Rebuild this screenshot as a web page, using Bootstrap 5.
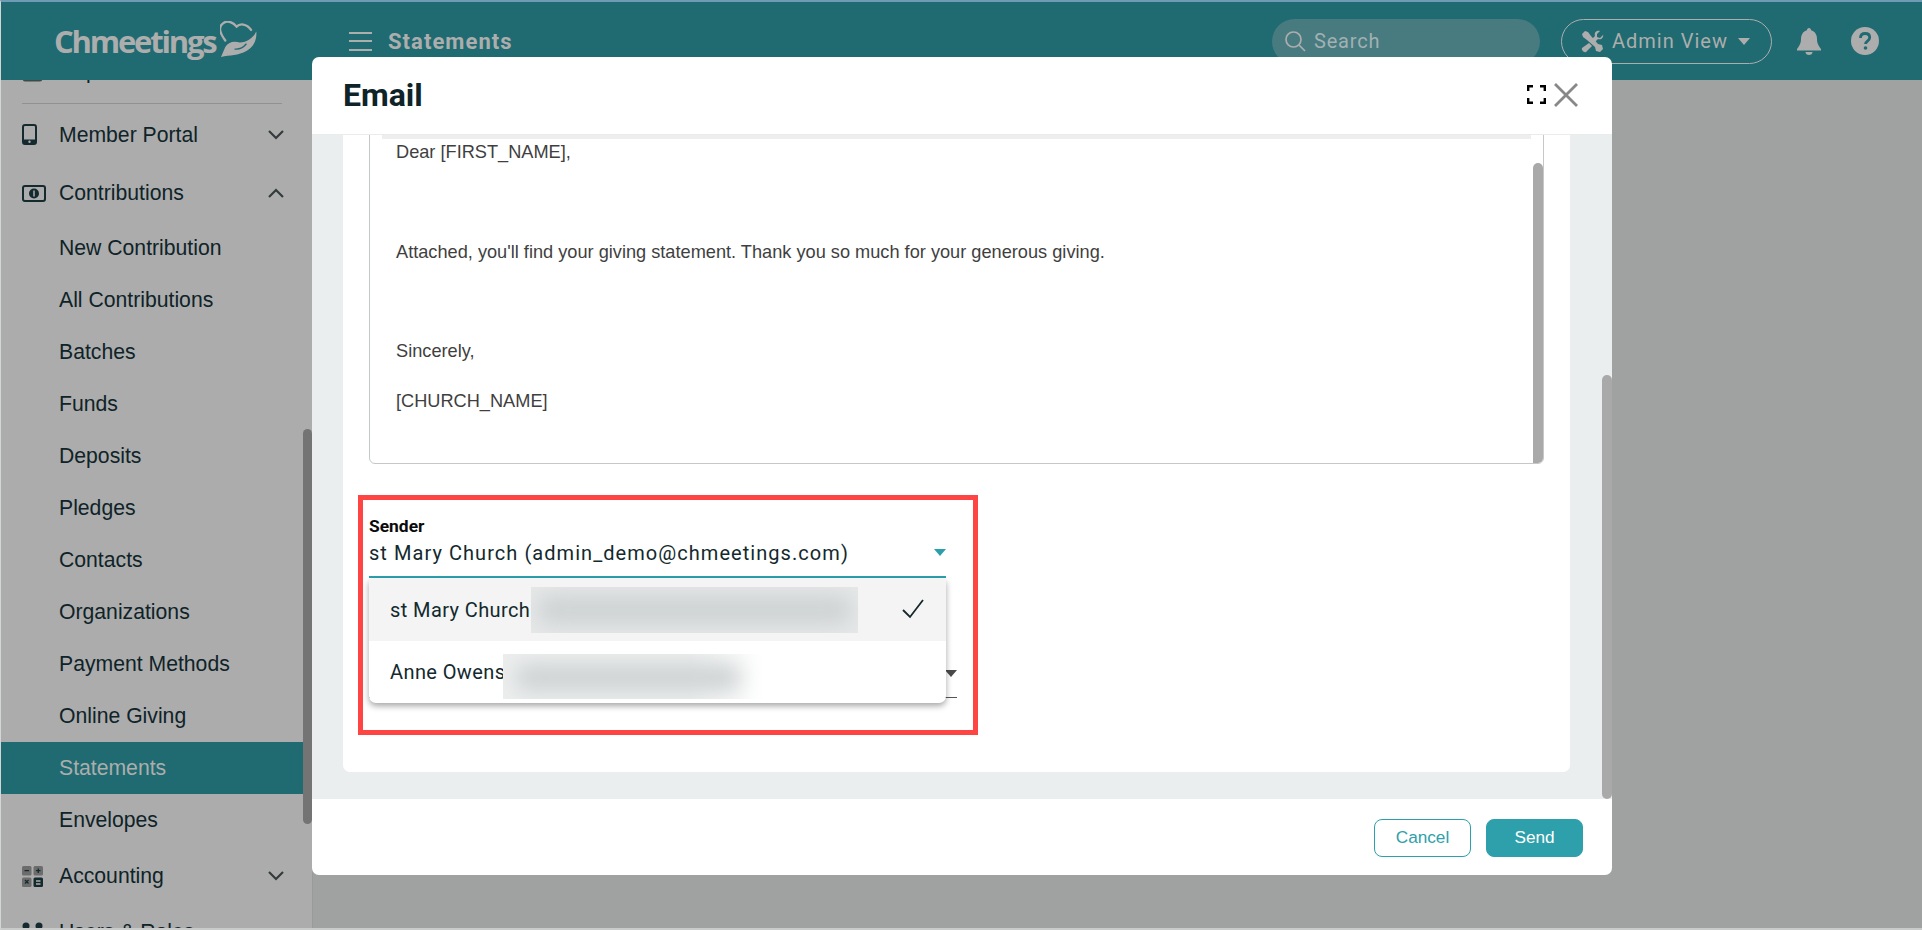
<!DOCTYPE html>
<html lang="en">
<head>
    <meta charset="UTF-8">
    <meta name="viewport" content="width=device-width, initial-scale=1.0">
    <title>Statements</title>
    <link href="https://cdn.jsdelivr.net/npm/bootstrap@5.3.0/dist/css/bootstrap.min.css" rel="stylesheet">
    <style>
        html, body { height: 100%; overflow: hidden; }
        body { font-family: "Liberation Sans", Arial, sans-serif; background: #a0a2a1; }
        .page { height: 930px; position: relative; border-top: 2px solid #6f9cb4; border-left: 1px solid #d4d6d6; border-bottom: 2px solid #c9cbcb; overflow: hidden; }

        .top-bar { height: 78px; background: #1f6b71; color: #adadad; padding-left: 53px; }
        .logo-text { font-family: "Open Sans", sans-serif; font-weight: 700; font-size: 31px; letter-spacing: -2.2px; width: 164px; line-height: 1; margin-top: 1px; }
        .logo-mark { margin-left: 2px; margin-top: -3px; flex: none; }
        .burger { margin-left: 92px; width: 23px; }
        .burger span { display: block; height: 2px; background: #adadad; margin-bottom: 6.5px; }
        .burger span:last-child { margin-bottom: 0; }
        .page-title { font-family: "Roboto", sans-serif; font-weight: 700; font-size: 22px; letter-spacing: 1.05px; margin-left: 16px; }
        .search-pill { width: 268px; height: 45px; border-radius: 23px; background: #477b80; margin-left: auto; padding-left: 12px; font-family: "Roboto", sans-serif; font-size: 20px; letter-spacing: .8px; color: #a2b1b2; }
        .admin-pill { width: 211px; height: 45px; border: 1px solid #adadad; border-radius: 23px; margin-left: 21px; padding-left: 19px; font-family: "Roboto", sans-serif; font-size: 20px; letter-spacing: 1px; }
        .admin-pill .caret { width: 0; height: 0; border-left: 6.5px solid transparent; border-right: 6.5px solid transparent; border-top: 7px solid #adadad; margin-left: 10px; }
        .bell { margin-left: 25px; }
        .help { margin-left: 30px; margin-right: 43px; }

        .side-nav { width: 312px; height: 850px; background: #acacac; overflow: hidden; position: relative; font-size: 21.2px; color: #0f2328; border-right: 1px solid #9a9a9a; }
        .side-nav .list { margin-top: -35px; }
        .side-nav .item { height: 52px; padding-left: 58px; display: flex; align-items: center; }
        .side-nav .group { padding-left: 21px; }
        .side-nav .group svg.ico { flex: none; }
        .side-nav .group .lbl { flex: 1; }
        .side-nav .group svg.chev { margin-right: 28px; }
        .side-nav .portal { margin-top: 4.5px; }
        .side-nav .portal .lbl { margin-left: 22px; }
        .side-nav .contrib { margin-top: 6.5px; margin-bottom: 3px; }
        .side-nav .contrib .lbl { margin-left: 13px; }
        .side-nav .account { margin-top: 4px; }
        .side-nav .account .lbl { margin-left: 16px; }
        .side-nav .active-item { background: #1f6b71; color: #adadad; margin-right: 9px; }
        .side-nav hr { margin: 6px 30px 0 21px; border-color: #919191; opacity: 1; }
        .side-thumb { position: absolute; left: 302px; top: 349px; width: 9px; height: 395px; border-radius: 5px; background: #747474; }

        .email-dialog { position: absolute; left: 311px; top: 55px; width: 1300px; height: 818px; border: 0; border-radius: 7px; overflow: hidden; background: #fff; }
        .email-dialog .modal-header { height: 78px; flex: none; padding: 0 34px 2px 31px; border-bottom: 1px solid #e9ebec; }
        .email-dialog .modal-title { font-family: "Roboto", sans-serif; font-weight: 700; font-size: 32px; color: #0e2429; }
        .email-dialog .modal-body { background: #ebeeef; padding: 0 42px 27px 31px; overflow: hidden; position: relative; display: flex; flex-direction: column; justify-content: flex-end; }
        .email-dialog .modal-footer { height: 76px; flex: none; padding: 2px 29px 0 0; border: 0; gap: 15px; }
        .email-dialog .modal-footer .btn { width: 97px; height: 38px; padding: 0; margin: 0; border-radius: 8px; font-size: 17.2px; }
        .btn-line { color: #2ea0ab; background: #fff; border: 1px solid #2ea0ab; }
        .btn-fill { color: #fff; background: #2ea0ab; border: 1px solid #2ea0ab; }
        .body-thumb { position: absolute; right: 0; bottom: 0; width: 10px; height: 424px; border-radius: 5px; background: #a9a9a9; }

        .form-card { background: #fff; border-radius: 0 0 7px 7px; padding: 0 26px; flex: none; height: 650px; }
        .editor { height: 342px; border: 1px solid #c6c8c8; border-radius: 6px; padding: 12px 12px 0 12px; position: relative; overflow: hidden; font-size: 18.2px; color: #3f3f3f; }
        .editor .bar { height: 4px; background: #eeeeee; margin-bottom: 2px; }
        .editor p { line-height: 22px; margin: 0 0 27.8px 14px; }
        .editor .thumb { position: absolute; right: 0; top: 40px; bottom: 0; width: 10px; background: #a9a9a9; border-radius: 5px 5px 0 0; }

        .sender { position: relative; padding-top: 52px; font-family: "Roboto", sans-serif; color: #12292d; }
        .sender-label { font-weight: 700; font-size: 17.4px; line-height: 20px; color: #0a0a0a; }
        .sender-select { width: 577px; height: 42px; padding-top: 2px; border-bottom: 2px solid #2ba0ab; font-size: 20px; letter-spacing: 1.05px; line-height: 30px; position: relative; }
        .arrow { position: absolute; width: 0; height: 0; border-left: 6.5px solid transparent; border-right: 6.5px solid transparent; }
        .sender-select .arrow { right: 0; top: 13px; border-top: 7px solid #2ba0ab; }
        .field-two { width: 588px; height: 120px; border-bottom: 1px solid #555; position: relative; }
        .field-two .arrow { right: 0; bottom: 20px; border-top: 7px solid #4a4a4a; }
        .sender-menu { position: absolute; left: 0; top: 115px; width: 577px; height: 124px; background: #fff; border-radius: 0 0 7px 7px; box-shadow: 0 3px 6px rgba(0,0,0,.35); font-size: 20px; letter-spacing: .4px; overflow: hidden; }
        .sender-menu .opt { height: 62px; padding-left: 21px; position: relative; }
        .sender-menu .opt-on { background: #f4f4f4; }
        .smudge { position: absolute; overflow: hidden; }
        .smudge i { position: absolute; inset: 8px 6px; background: #cfd3d4; filter: blur(10px); border-radius: 14px; }
        .smudge-a { left: 162px; top: 8px; width: 327px; height: 46px; background: #e6e8e8; }
        .smudge-b { left: 134px; top: 13px; width: 260px; height: 45px; background: linear-gradient(90deg, #eceeee 72%, #fff); }
        .smudge-b i { inset: 10px 22px 8px 12px; }
        .tick { position: absolute; right: 22px; top: 20px; }
        .red-note { position: absolute; left: -11px; top: 31px; width: 620px; height: 240px; border: 5px solid #ff4444; pointer-events: none; }
    </style>
</head>
<body>
<div class="page">
    <header class="top-bar d-flex align-items-center">
        <div class="logo-text">Chmeetings</div>
        <svg class="logo-mark" width="37" height="37" viewBox="540 33 112 112">
            <path d="M556 92C540 70 532 50 552 38c14-8 30 2 38 12 10-10 30-10 44 10" fill="none" stroke="#adadad" stroke-width="7" stroke-linecap="round"/>
            <path d="M543 142l13-30c8-14 24-20 44-14 22 0 40-14 50-33 2 25-8 47-30 59-24 14-50 12-77 18z" fill="#adadad"/>
            <path d="M584 118c14 2 26-4 36-16" fill="none" stroke="#1f6b71" stroke-width="4"/>
        </svg>
        <div class="burger"><span></span><span></span><span></span></div>
        <div class="page-title">Statements</div>

        <div class="search-pill d-flex align-items-center gap-2">
            <svg width="22" height="22" viewBox="0 0 22 22" fill="none" stroke="#adadad" stroke-width="1.7"><circle cx="9.5" cy="9.5" r="7.5"/><path d="M15 15l6 6"/></svg>
            <span>Search</span>
        </div>
        <div class="admin-pill d-flex align-items-center">
            <svg class="me-2" width="23" height="23" viewBox="0 0 23 23" fill="#adadad">
                <path d="M1 4l3-3 3 1 3 4 7 8 4 1 1 4-3 3-4-1-1-4-8-7-4-3z"/>
                <path d="M22 5l-3 3-3-1 0-3 3-3c-4-1-6 2-5 5l-3 3 3 3 3-3c3 1 6-1 5-5z"/>
                <path d="M8 13l3 3-6 6c-2 1-5-2-4-4z"/>
            </svg>
            <span>Admin View</span>
            <span class="caret"></span>
        </div>
        <svg class="bell" width="24" height="27" viewBox="0 0 24 27" fill="#adadad"><path d="M12 0c1.300 0 2 1 2 2.200 4 1 6 4.500 6 8.800 0 5 2 7 4 10v1.500H0V21c2-3 4-5 4-10 0-4.300 2-7.800 6-8.800C10 1 10.700 0 12 0z"/><path d="M8.500 24h7c0 2-1.500 3-3.500 3s-3.500-1-3.500-3z"/></svg>
        <svg class="help" width="28" height="28" viewBox="0 0 28 28"><circle cx="14" cy="14" r="14" fill="#adadad"/><path d="M9.500 11c0-3 2-4.500 4.700-4.500s4.500 1.500 4.500 4c0 3.500-4.200 3.500-4.200 6.500" fill="none" stroke="#1f6b71" stroke-width="2.800"/><circle cx="14.500" cy="21" r="1.800" fill="#1f6b71"/></svg>
    </header>

    <nav class="side-nav">
        <div class="list">
            <div class="item group">
                <svg class="ico me-3" width="21" height="21" viewBox="0 0 21 21"><rect x="0.500" y="0.500" width="20" height="20" rx="3" fill="#40484a"/></svg>
                <span class="lbl">Reports</span>
            </div>
            <hr>
            <div class="item group portal">
                <svg class="ico" width="15" height="21" viewBox="0 0 15 21" fill="none"><rect x="1" y="1" width="13" height="19" rx="2" stroke="#142a2f" stroke-width="2"/><rect x="1" y="15.500" width="13" height="4.500" fill="#142a2f"/><circle cx="7.500" cy="17.800" r="1.200" fill="#acacac"/></svg>
                <span class="lbl">Member Portal</span>
                <svg class="chev" width="16" height="10" viewBox="0 0 16 10" fill="none" stroke="#333b3d" stroke-width="2.200"><path d="M1 1l7 7 7-7"/></svg>
            </div>
            <div class="item group contrib">
                <svg class="ico" width="24" height="17" viewBox="0 0 24 17"><rect x="1" y="1" width="22" height="15" rx="2" fill="none" stroke="#142a2f" stroke-width="2"/><ellipse cx="12" cy="8.500" rx="5" ry="5" fill="#142a2f"/><path d="M12 5.500v6" stroke="#acacac" stroke-width="1.500"/></svg>
                <span class="lbl">Contributions</span>
                <svg class="chev" width="16" height="10" viewBox="0 0 16 10" fill="none" stroke="#333b3d" stroke-width="2.200"><path d="M1 9l7-7 7 7"/></svg>
            </div>
            <div class="item">New Contribution</div>
            <div class="item">All Contributions</div>
            <div class="item">Batches</div>
            <div class="item">Funds</div>
            <div class="item">Deposits</div>
            <div class="item">Pledges</div>
            <div class="item">Contacts</div>
            <div class="item">Organizations</div>
            <div class="item">Payment Methods</div>
            <div class="item">Online Giving</div>
            <div class="item active-item">Statements</div>
            <div class="item">Envelopes</div>
            <div class="item group account">
                <svg class="ico" width="21" height="21" viewBox="0 0 21 21"><rect width="9.500" height="9.500" rx="1.500" fill="#6c6c6c"/><rect x="11.500" width="9.500" height="9.500" rx="1.500" fill="#6c6c6c"/><rect y="11.500" width="9.500" height="9.500" rx="1.500" fill="#6c6c6c"/><rect x="11.500" y="11.500" width="9.500" height="9.500" rx="1.500" fill="#142a2f"/><path d="M2.500 4.700h4.500M14 4.700h4.500M16.250 2.500v4.500M3 14l3.500 3.500M6.500 14L3 17.500" stroke="#142a2f" stroke-width="1.300"/><path d="M14 15h4.500M14 18h4.500" stroke="#acacac" stroke-width="1.300"/></svg>
                <span class="lbl">Accounting</span>
                <svg class="chev" width="16" height="10" viewBox="0 0 16 10" fill="none" stroke="#333b3d" stroke-width="2.200"><path d="M1 1l7 7 7-7"/></svg>
            </div>
            <div class="item group account">
                <svg class="ico" width="21" height="21" viewBox="0 0 21 21" fill="#142a2f"><circle cx="4" cy="4" r="3.500"/><circle cx="17" cy="4" r="3.500"/><rect x="0" y="9" width="8" height="9" rx="2"/><rect x="13" y="9" width="8" height="9" rx="2"/></svg>
                <span class="lbl">Users &amp; Roles</span>
            </div>
        </div>
        <div class="side-thumb"></div>
    </nav>

    <div class="modal-content email-dialog d-flex flex-column">
        <div class="modal-header d-flex align-items-center">
            <h5 class="modal-title">Email</h5>
            <div class="ms-auto d-flex align-items-center gap-2">
                <svg width="19" height="19" viewBox="0 0 19 19" fill="none" stroke="#000" stroke-width="2.400"><path d="M1.200 6V1.200H6M13 1.200h4.800V6M1.200 13v4.800H6M13 17.800h4.800V13"/></svg>
                <svg width="24" height="24" viewBox="0 0 24 24" fill="none" stroke="#888" stroke-width="2.800"><path d="M1 1l22 22M23 1L1 23"/></svg>
            </div>
        </div>
        <div class="modal-body">
            <div class="form-card">
                <div class="editor">
                    <div class="bar"></div>
                    <p>Dear [FIRST_NAME],</p>
                    <p>&nbsp;</p>
                    <p>Attached, you'll find your giving statement. Thank you so much for your generous giving.</p>
                    <p>&nbsp;</p>
                    <p>Sincerely,</p>
                    <p>[CHURCH_NAME]</p>
                    <div class="thumb"></div>
                </div>
                <div class="sender">
                    <div class="sender-label">Sender</div>
                    <div class="sender-select">st Mary Church (admin_demo@chmeetings.com)<span class="arrow"></span></div>
                    <div class="field-two"><span class="arrow"></span></div>
                    <div class="sender-menu">
                        <div class="opt opt-on d-flex align-items-center">
                            <span>st Mary Church</span>
                            <div class="smudge smudge-a"><i></i></div>
                            <svg class="tick" width="22" height="20" viewBox="0 0 22 20" fill="none" stroke="#16282c" stroke-width="1.800"><path d="M1 11l7 7L21 1"/></svg>
                        </div>
                        <div class="opt d-flex align-items-center">
                            <span>Anne Owens</span>
                            <div class="smudge smudge-b"><i></i></div>
                        </div>
                    </div>
                    <div class="red-note"></div>
                </div>
            </div>
            <div class="body-thumb"></div>
        </div>
        <div class="modal-footer">
            <button type="button" class="btn btn-line">Cancel</button>
            <button type="button" class="btn btn-fill">Send</button>
        </div>
    </div>
</div>
<script src="https://cdn.jsdelivr.net/npm/bootstrap@5.3.0/dist/js/bootstrap.bundle.min.js"></script>
</body>
</html>
